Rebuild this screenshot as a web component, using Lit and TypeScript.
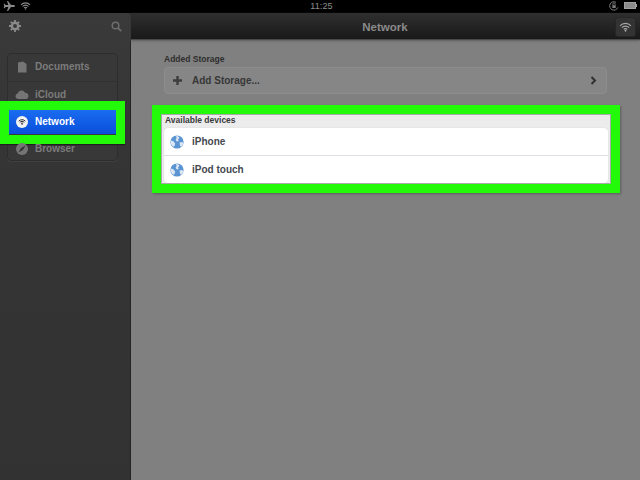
import { LitElement, html, css, svg } from "lit";
import { customElement } from "lit/decorators.js";

const wifiArcs = (c: string, w: number) => svg`
  <g fill="none" stroke=${c} stroke-width=${w} stroke-linecap="butt">
    <path d="M1.5 6.5a10 10 0 0 1 15 0"/><path d="M4 9.2a6.6 6.6 0 0 1 10 0"/><path d="M6.6 11.6a3.2 3.2 0 0 1 4.8 0"/>
  </g><path d="M9 15l-1.6-2a2.2 2.2 0 0 1 3.2 0z" fill=${c}/>`;

const globe = html`<svg class="globe" viewBox="0 0 14 14">
  <circle cx="7" cy="7" r="6.6" fill="#5a94d2"/>
  <path d="M6 .8c1.8.3 3 1 3.4 2L8 4.4 8.8 6l-2 .6-1.2-1.8L6.6 3zM9.5 7.5l2.8-.6.9 1.4c-.3 1.6-1 2.8-2.2 3.6l-1-1.4zM1 5.6l2.4.6 1.8 2.2-.6 2.6-1.4.8C1.600 10.600.8 9 .8 7z" fill="#dbe7f3"/>
</svg>`;

@customElement("app-root")
export class AppRoot extends LitElement {
  static styles = css`
    :host { display: block; width: 640px; height: 480px; overflow: hidden; font-family: "Liberation Sans", Arial, sans-serif; font-weight: 700; background: #000; }
    svg { display: block; flex: none; }
    .status { height: 13px; background: #000; display: flex; align-items: center; padding: 0 3px 2px 3px; box-sizing: border-box; color: #8f8f8f; font-size: 9px; font-weight: 400; }
    .status .left { flex: 1; display: flex; align-items: center; gap: 5px; }
    .status .right { flex: 1; display: flex; justify-content: flex-end; align-items: center; gap: 5px; }
    .time { letter-spacing: .1px; margin-left: 3px; }
    .body { display: grid; grid-template-columns: 131px 1fr; height: 467px; }
    .side { background: linear-gradient(#3a3a3a, #353535 120px, #323232); border-right: 1px solid #242424; padding: 0 13px 0 7px; box-sizing: border-box; }
    .tools { height: 26px; display: flex; justify-content: space-between; align-items: center; padding: 0 0 1px 2px; margin: 0 -5px 13px 0; }
    .list { width: 111px; height: 108px; border: 1px solid #2d2d2d; border-radius: 4px; box-sizing: border-box; background: #383838; box-shadow: 0 1px 0 #404040; }
    .row { height: 27.500px; display: flex; align-items: center; gap: 7px; padding: 0 0 1px 7px; box-sizing: border-box; color: #7c7c7c; font-size: 10px; border-bottom: 1px solid #303030; position: relative; }
    .row:last-child { border-bottom: 0; }
    .row.active { color: #fff; background: linear-gradient(#1a6cf0, #0a4fdc); margin: 1px 1px 1.500px 0; height: 24px; border: 0; }
    .row.active::before { content: ""; position: absolute; left: -8px; top: -9px; right: -9px; bottom: -10px; border: 9px solid #22fa0a; box-shadow: 0 1px 1px #1f1f1f; pointer-events: none; }
    .icon { width: 13px; display: flex; justify-content: center; }
    .main { display: flex; flex-direction: column; background: #808080; }
    .bar { height: 27px; box-sizing: border-box; background: linear-gradient(#2f2f2f, #191919); border-bottom: 1px solid #4a4a4a; display: flex; align-items: center; padding: 1px 4px 0 207px; color: #8a8a8a; font-size: 11.500px; box-shadow: 0 1px 2px #5e5e5e; }
    .bar span { width: 94px; text-align: center; flex: none; }
    .wifi-btn { margin-left: auto; width: 21px; height: 20px; border-radius: 3px; background: #333; border: 1px solid #262626; display: flex; align-items: center; justify-content: center; box-sizing: border-box; }
    .content { padding: 14px 0 0 33px; }
    .label { font-size: 8.500px; color: #2e2e2e; height: 13px; line-height: 10px; }
    .storage { width: 443px; height: 27px; box-sizing: border-box; border: 1px solid #8d8d8d; border-radius: 4px; background: #868686; display: flex; align-items: center; gap: 10px; padding: 0 9px 0 8px; color: #373737; font-size: 10px; }
    .storage .grow { flex: 1; }
    .panel { margin: 11px 0 0 -12px; width: 450px; height: 70px; box-sizing: content-box; border: 9px solid #22fa0a; background: #ececec; box-shadow: 1px 1px 2px #5c5c5c, inset 0 0 0 1px #a8a8a8; }
    .panel .label { padding: 1px 0 0 4px; height: 14px; box-sizing: border-box; line-height: 10px; color: #3a3a3a; }
    .devices { margin-left: 3px; width: 444px; height: 55px; background: #fff; border-radius: 4px; box-shadow: 0 0 1px #bdbdbd; }
    .device { height: 27.500px; box-sizing: border-box; display: flex; align-items: center; gap: 8px; padding: 1px 0 0 6px; font-size: 10px; color: #44484f; border-bottom: 1px solid #dde0e5; }
    .device:last-child { border-bottom: 0; }
    .globe { width: 14px; height: 14px; }
  `;

  render() {
    return html`
      <div class="status">
        <div class="left">
          <svg width="12" height="10" viewBox="0 0 12 10"><path d="M12 5c0-.6-.7-.9-1.500-.9H8L5 0H4l1.300 4.100H2.700L1.500 2.800H.7L1.200 5 .7 7.200h.8l1.200-1.300h2.600L4 10h1l3-4.100h2.500C11.300 5.900 12 5.600 12 5z" fill="#8a8a8a"/></svg>
          <svg width="11" height="9" viewBox="0 0 18 15">${wifiArcs("#8a8a8a", 1.800)}</svg>
        </div>
        <span class="time">11:25</span>
        <div class="right">
          <svg width="10" height="10" viewBox="0 0 10 10"><path d="M8.800 6.500A4.200 4.200 0 1 1 7 1.300" fill="none" stroke="#7d7d7d"/><rect x="3.300" y="4.200" width="3.400" height="2.800" fill="#7d7d7d"/><path d="M3.900 4.200V3a1.100 1.100 0 0 1 2.200 0v1.200" fill="none" stroke="#7d7d7d" stroke-width=".8"/></svg>
          <svg width="13" height="7" viewBox="0 0 13 7"><rect x=".5" y=".5" width="11" height="6" fill="#8c8c8c" stroke="#a0a0a0"/><rect x="12" y="2" width="1" height="3" fill="#a0a0a0"/></svg>
        </div>
      </div>
      <div class="body">
        <aside class="side">
          <div class="tools">
            <svg width="12" height="12" viewBox="0 0 12 12"><circle cx="6" cy="6" r="3.200" fill="none" stroke="#8a8a8a" stroke-width="2.400"/><path d="M6 0v12M0 6h12M1.800 1.800l8.400 8.400M10.200 1.800l-8.400 8.400" stroke="#8a8a8a" stroke-width="1.800" stroke-dasharray="2 8 2 0"/></svg>
            <svg width="11" height="11" viewBox="0 0 11 11"><circle cx="4.500" cy="4.500" r="3.300" fill="none" stroke="#6e6e6e" stroke-width="1.500"/><path d="M7 7l3.200 3.200" stroke="#6e6e6e" stroke-width="1.800"/></svg>
          </div>
          <div class="list">
            <div class="row"><span class="icon"><svg width="10" height="12" viewBox="0 0 10 12"><path d="M1 1.500 6 .5 9.500 3v8.500H1z" fill="#757575"/></svg></span>Documents</div>
            <div class="row"><span class="icon"><svg width="14" height="9" viewBox="0 0 14 9"><path d="M3 9a2.800 2.800 0 0 1-.4-5.500A4 4 0 0 1 10 2.700 3.200 3.200 0 0 1 11 9z" fill="#757575"/></svg></span>iCloud</div>
            <div class="row active"><span class="icon"><svg width="12" height="12" viewBox="0 0 12 12"><circle cx="6" cy="6" r="6" fill="#f4f4f4"/><g transform="translate(2 2.300) scale(.45)">${wifiArcs("#1b1b1b", 2)}</g></svg></span>Network</div>
            <div class="row"><span class="icon"><svg width="12" height="12" viewBox="0 0 12 12"><circle cx="6" cy="6" r="6" fill="#757575"/><path d="M9.500 2.500 7 7 2.500 9.500 5 5z" fill="#373737"/></svg></span>Browser</div>
          </div>
        </aside>
        <main class="main">
          <div class="bar"><span>Network</span>
            <div class="wifi-btn"><svg width="13" height="11" viewBox="0 0 18 15">${wifiArcs("#a8a8a8", 1.600)}</svg></div>
          </div>
          <div class="content">
            <div class="label">Added Storage</div>
            <div class="storage">
              <svg width="9" height="9" viewBox="0 0 9 9"><path d="M4.500 0v9M0 4.500h9" stroke="#3d3d3d" stroke-width="2.400"/></svg>
              <span class="grow">Add Storage...</span>
              <svg width="7" height="9" viewBox="0 0 7 9"><path d="M1.500 1l3.500 3.500L1.500 8" fill="none" stroke="#303030" stroke-width="2"/></svg>
            </div>
            <section class="panel">
              <div class="label">Available devices</div>
              <div class="devices">
                <div class="device">${globe}iPhone</div>
                <div class="device">${globe}iPod touch</div>
              </div>
            </section>
          </div>
        </main>
      </div>`;
  }
}
